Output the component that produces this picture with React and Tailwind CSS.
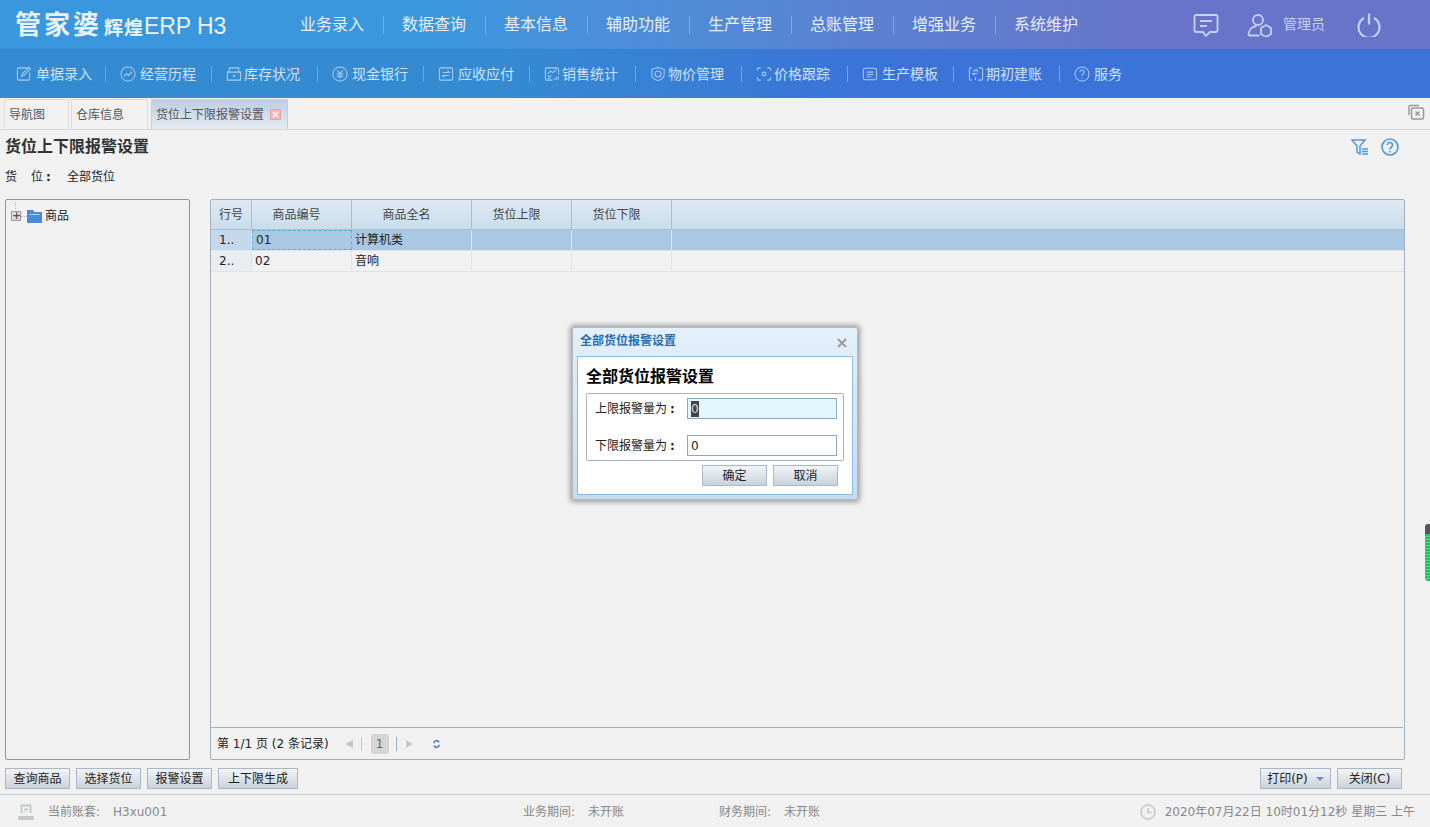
import React from 'react';

const FONT = "font-['DejaVu_Sans','Noto_Sans_CJK_SC',sans-serif]";

const topMenus = ['业务录入', '数据查询', '基本信息', '辅助功能', '生产管理', '总账管理', '增强业务', '系统维护'];

const ico = 'w-[16px] h-[16px] shrink-0 fill-none stroke-[#a9cdf0] stroke-[1.1]';

const subMenus = [
  { label: '单据录入', gap: 'gap-[4px]', icon: <><path d="M13 2H3a1.500 1.500 0 0 0-1.500 1.500v10A1.500 1.500 0 0 0 3 15h10a1.500 1.500 0 0 0 1.500-1.500V7" /><path d="M6 11l1-3 7-6.500 1.500 1.500L8.500 10z" /></> },
  { label: '经营历程', gap: 'gap-[4px]', icon: <><circle cx="8.500" cy="8.500" r="7.500" /><path d="M4 11l3-3 2 2 4-4" /></> },
  { label: '库存状况', gap: 'gap-[2px]', icon: <><path d="M1.500 6.500h14V15h-14zM3.500 6.500V2h10v4.500M7 10.500h3" /></> },
  { label: '现金银行', gap: 'gap-[4px]', icon: <><circle cx="8.500" cy="8.500" r="7.500" /><path d="M5.500 4.500l3 3.500 3-3.500M5 8.500h7M5 11h7M8.500 8v5.500" /></> },
  { label: '应收应付', gap: 'gap-[4px]', icon: <><rect x="1.500" y="2" width="14" height="13" rx="1.500" /><path d="M5 7h7L10 5M12 10H5l2 2" /></> },
  { label: '销售统计', gap: 'gap-[2px]', icon: <><path d="M9 15H3a1.500 1.500 0 0 1-1.500-1.500v-10A1.500 1.500 0 0 1 3 2h11a1.500 1.500 0 0 1 1.500 1.500V9" /><path d="M4 8l3-2.500 2 1.500 4-3M4 11h4M4 13h3M11 15v-2M13 15v-3.500M15 15v-4" /></> },
  { label: '物价管理', gap: 'gap-[2px]', icon: <><path d="M8.500 1.500l6.500 2v5.500c0 3-3 5.500-6.500 6.500-3.500-1-6.500-3.500-6.500-6.500V3.500z" /><circle cx="8.500" cy="8.500" r="3.200" /></> },
  { label: '价格跟踪', gap: 'gap-[2px]', icon: <><path d="M5 2H3a1.500 1.500 0 0 0-1.500 1.500V5M12 2h2a1.500 1.500 0 0 1 1.500 1.500V5M5 15H3a1.500 1.500 0 0 1-1.500-1.500V12M12 15h2a1.500 1.500 0 0 0 1.500-1.500V12" /><circle cx="8.500" cy="8.500" r="2" /></> },
  { label: '生产模板', gap: 'gap-[4px]', icon: <><rect x="1.500" y="2.500" width="14" height="12" rx="2" /><path d="M5 6.500h7M5 9h7M5 11.500h5" /></> },
  { label: '期初建账', gap: 'gap-[2px]', icon: <><path d="M4 2H3a1.500 1.500 0 0 0-1.500 1.500v10A1.500 1.500 0 0 0 3 15h1M11 2h3a1.500 1.500 0 0 1 1.500 1.500v10A1.500 1.500 0 0 1 14 15h-3" /><path d="M5 5h5L8 3M10 8H5l2 2M8 12v3" /></> },
  { label: '服务', gap: 'gap-[4px]', icon: <><circle cx="8.500" cy="8.500" r="7.500" /><path d="M6.200 6.500a2.300 2.300 0 1 1 3.500 2c-.8.500-1.200 1-1.200 2M8.500 12.300v1" /></> },
];

const columns = [
  { label: '行号', width: 'w-[41px]' },
  { label: '商品编号', width: 'w-[100px] pr-[10px]' },
  { label: '商品全名', width: 'w-[120px] pr-[10px]' },
  { label: '货位上限', width: 'w-[100px] pr-[10px]' },
  { label: '货位下限', width: 'w-[100px] pr-[10px]' },
];

const rows = [
  { no: '1..', code: '01', name: '计算机类', selected: true },
  { no: '2..', code: '02', name: '音响', selected: false },
];

const Btn = ({ children, className = '' }) => (
  <button className={`h-[21px] border border-[#a9b6c6] bg-gradient-to-b from-[#f3f5f7] to-[#c9d2da] text-[12px] text-[#222] flex items-center justify-center ${className}`}>
    {children}
  </button>
);

const Sep = ({ className }) => <span className={`w-px shrink-0 ${className}`} />;

const TopBar = () => (
  <div className="h-[49px] shrink-0 flex items-center bg-gradient-to-r from-[#3b97dd] from-30% to-[#6774c9] to-80%">
    <div className="w-[300px] pl-[15px] flex items-end text-[#e8f2fb] leading-none">
      <span className="text-[26px] font-bold tracking-[3px]">管家婆</span>
      <span className="text-[19px] font-bold ml-[2px] tracking-[1px]">辉煌</span>
      <span className="text-[23px] tracking-[-0.1px] font-['Liberation_Sans',sans-serif]">ERP H3</span>
    </div>
    <div className="flex items-center text-[16px] text-[#e6eefa]">
      {topMenus.map((m, i) => (
        <React.Fragment key={m}>
          {i > 0 && <Sep className="h-[18px] mx-[18.5px] bg-[#6fb0e6]" />}
          <span>{m}</span>
        </React.Fragment>
      ))}
    </div>
    <div className="ml-auto flex items-center">
      <svg viewBox="0 0 26 24" className="w-[26px] h-[24px] fill-none stroke-[#c3d2f0] stroke-[1.8]">
        <path d="M3 2h20a1.500 1.500 0 0 1 1.500 1.500v14a1.500 1.500 0 0 1-1.500 1.500h-6l-4 4-3-4H3a1.500 1.500 0 0 1-1.500-1.500v-14A1.500 1.500 0 0 1 3 2z" />
        <path d="M7 8h12M7 13h7" />
      </svg>
      <svg viewBox="0 0 26 24" className="w-[26px] h-[24px] ml-[28px] fill-none stroke-[#c3d2f0] stroke-[1.8]">
        <circle cx="11" cy="7" r="5" />
        <path d="M1.500 22.500c0-5 3-9 8-9.500M1.500 22.500h11" />
        <path d="M19 12l5 3v6l-5 3-5-3v-6z" />
      </svg>
      <span className="text-[14px] text-[#c3d2f0] ml-[10px]">管理员</span>
      <svg viewBox="0 0 24 24" className="w-[24px] h-[24px] ml-[32px] mr-[49px] fill-none stroke-[#c3d2f0] stroke-[2.2]">
        <path d="M7 5a10.500 10.500 0 1 0 10 0M12 0.500v11" />
      </svg>
    </div>
  </div>
);

const SubBar = () => (
  <div className="h-[49px] shrink-0 flex items-center pl-[16px] pt-[1px] bg-gradient-to-r from-[#358bd2] from-35% to-[#3b73d8] to-60% text-[14px] text-[#cfe2f6]">
    {subMenus.map((m, i) => (
      <React.Fragment key={m.label}>
        {i > 0 && <Sep className="h-[16px] ml-[15px] mr-[14px] bg-[#6aa9e2]" />}
        <span className={`flex items-center whitespace-nowrap ${m.gap} ${i === 0 ? 'w-[74px]' : 'w-[76px]'}`}>
          <svg viewBox="0 0 17 17" className={ico}>{m.icon}</svg>
          {m.label}
        </span>
      </React.Fragment>
    ))}
  </div>
);

const Tabs = () => (
  <div className="h-[32px] shrink-0 flex items-end pl-[4px] border-b border-[#d8d8d8] relative">
    <div className="h-[30px] w-[65px] border border-b-0 border-[#dcdcdc] flex items-center pl-[4px] text-[12px] text-[#555]">导航图</div>
    <div className="h-[30px] w-[77px] ml-[2px] border border-b-0 border-[#dcdcdc] flex items-center pl-[4px] text-[12px] text-[#555]">仓库信息</div>
    <div className="h-[30px] w-[137px] ml-[3px] border border-b-0 border-[#c5cfdc] bg-gradient-to-b from-[#bccde4] to-[#e6ebf1] flex items-center pl-[4px] text-[12px] text-[#555]">
      货位上下限报警设置
      <span className="ml-[6px] w-[11px] h-[11px] bg-[#eeb6b6] border border-[#e8a4a4] text-white text-[10px] leading-[9px] text-center font-bold">×</span>
    </div>
    <svg viewBox="0 0 18 16" className="absolute right-[5px] top-[6px] w-[18px] h-[16px] fill-none stroke-[#999] stroke-[1.5]">
      <path d="M2 11V3a1.500 1.500 0 0 1 1.500-1.500H12" />
      <rect x="4.500" y="4" width="12" height="11" rx="1.500" />
      <path d="M8.500 7.500l4 4M12.500 7.500l-4 4" />
    </svg>
  </div>
);

const Tree = () => (
  <div className="w-[185px] shrink-0 border border-[#8d96a0] rounded-[2px] relative pt-[7px] pl-[5px]">
    <div className="flex items-center">
      <span className="w-[10px] h-[10px] border border-[#999] bg-[#ddd] text-[11px] leading-[8px] text-center font-bold text-[#555]">+</span>
      <span className="w-[6px] border-t border-dotted border-[#bbb]" />
      <svg viewBox="0 0 15 14" className="w-[15px] h-[14px]">
        <path d="M0 1h6l1.500 2H15v11H0z" fill="#4a8adb" />
        <path d="M2.500 5.500h10" stroke="#b5d3f2" strokeWidth="1" />
      </svg>
      <span className="ml-[3px] text-[12px] text-[#222]">商品</span>
    </div>
    <span className="absolute left-[9px] top-[2px] h-[7px] border-l border-dotted border-[#bbb]" />
  </div>
);

const Grid = () => (
  <div className="flex-1 min-w-0 flex flex-col border border-[#a3afbc] rounded-[2px]">
    <div className="h-[30px] shrink-0 flex border-b border-[#a5bfd6] bg-gradient-to-b from-[#e0eaf3] to-[#c9dcec] text-[12px] text-[#444]">
      {columns.map((c) => (
        <div key={c.label} className={`${c.width} flex items-center justify-center border-r border-[#a5bfd6]`}>{c.label}</div>
      ))}
    </div>
    {rows.map((r) => (
      <div key={r.no} className={`h-[21px] shrink-0 flex text-[12px] text-[#222] border-b border-[#dce5ee] ${r.selected ? 'bg-[#abc8e2]' : ''}`}>
        <div className={`w-[41px] flex items-center pl-[8px] border-r border-[#dce5ee] ${r.selected ? 'bg-[#c3d8ea]' : 'bg-[#e8edf2]'}`}>{r.no}</div>
        <div className={`w-[100px] flex items-center pl-[3px] ${r.selected ? 'border border-dashed border-[#55b2cf]' : 'border-r border-[#dce5ee]'}`}>{r.code}</div>
        <div className="w-[120px] flex items-center pl-[3px] border-r border-[#dce5ee]">{r.name}</div>
        <div className="w-[100px] border-r border-[#dce5ee]" />
        <div className="w-[100px] border-r border-[#dce5ee]" />
      </div>
    ))}
    <div className="flex-1" />
    <div className="h-[32px] shrink-0 mr-[1px] border-t border-[#9fb0c0] flex items-center pl-[6px] text-[12px] text-[#222]">
      <span>第 1/1 页 (2 条记录)</span>
      <span className="ml-[16px] w-0 h-0 border-y-[4px] border-y-transparent border-r-[8px] border-r-[#c4c8cc]" />
      <Sep className="h-[14px] mx-[8.5px] bg-[#bcc6d0]" />
      <span className="w-[18px] h-[20px] rounded-[2px] bg-[#d5d5d5] text-[#666] flex items-center justify-center">1</span>
      <Sep className="h-[14px] mx-[7px] bg-[#8fb0cf]" />
      <span className="ml-[2px] w-0 h-0 border-y-[4px] border-y-transparent border-l-[7px] border-l-[#c4c8cc]" />
      <svg viewBox="0 0 8 10" className="ml-[20px] w-[7px] h-[10px] fill-none stroke-[#4a7fb5] stroke-[1.8]">
        <path d="M1 4a3 3 0 0 1 5-2l1 1M7 6a3 3 0 0 1-5 2L1 7" />
      </svg>
    </div>
  </div>
);

const StatusBar = () => (
  <div className="h-[33px] shrink-0 pt-[1px] border-t border-[#c4cbd2] flex items-center text-[12px] text-[#888]">
    <svg viewBox="0 0 16 16" className="ml-[18px] w-[16px] h-[16px] fill-none stroke-[#c4c8cc] stroke-[1.800]">
      <path d="M3.500 9V1.500h9V9M6 5.500h4" />
      <path d="M1 13h14v2H1z" fill="#c4c8cc" />
    </svg>
    <span className="ml-[14px] w-[65px]">当前账套:</span>
    <span className="w-[410px]">H3xu001</span>
    <span className="w-[65px]">业务期间:</span>
    <span className="w-[131px]">未开账</span>
    <span className="w-[65px]">财务期间:</span>
    <span>未开账</span>
    <svg viewBox="0 0 16 16" className="ml-auto w-[16px] h-[16px] fill-none stroke-[#c8c8c8] stroke-[1.600]">
      <circle cx="8" cy="8" r="7" />
      <path d="M8 4v4.500h3.500" />
    </svg>
    <span className="ml-[9px] mr-[15px]">2020年07月22日 10时01分12秒 星期三 上午</span>
  </div>
);

const Dialog = () => (
  <div className="absolute left-[572px] top-[327px] w-[286px] h-[173px] bg-gradient-to-b from-[#e4f0fb] to-[#c4dcf4] border border-[#b0b8c0] rounded-[2px] shadow-[0_0_5px_2px_rgba(90,90,90,0.55)] px-[4px] pb-[4px] flex flex-col">
    <div className="h-[28px] shrink-0 flex items-center pl-[3px] pr-[6px] pb-[2px] justify-between text-[12px] font-bold text-[#2a6cb0]">
      全部货位报警设置
      <svg viewBox="0 0 10 10" className="w-[10px] h-[10px] mt-[4px] fill-none stroke-[#9a9a9a] stroke-[2]">
        <path d="M1 1l8 8M9 1L1 9" />
      </svg>
    </div>
    <div className="flex-1 bg-white border border-[#8fbbe0] px-[8px] pt-[9px]">
      <div className="text-[16px] font-bold text-black leading-[21px]">全部货位报警设置</div>
      <div className="mt-[6px] h-[68px] border border-[#aab2ba] rounded-[2px] pl-[8px] pt-[4px] text-[12px] text-[#222]">
        <div className="flex items-center h-[21px]">
          <span className="w-[92px]">上限报警量为<span className="ml-[3px] font-bold">:</span></span>
          <div className="w-[150px] h-[21px] border border-[#86a9c4] bg-[#e2f6fe] flex items-center pl-[3px]">
            <span className="bg-[#444] text-[#ddd] leading-[16px]">0</span>
          </div>
        </div>
        <div className="flex items-center h-[21px] mt-[16px]">
          <span className="w-[92px]">下限报警量为<span className="ml-[3px] font-bold">:</span></span>
          <div className="w-[150px] h-[21px] border border-[#86a9c4] bg-white flex items-center pl-[3px]">0</div>
        </div>
      </div>
      <div className="mt-[4px] flex justify-end gap-[6px] pr-[6px]">
        <Btn className="w-[65px]">确定</Btn>
        <Btn className="w-[65px]">取消</Btn>
      </div>
    </div>
  </div>
);

export default function App() {
  return (
    <div className={`${FONT} w-[1430px] h-[827px] overflow-hidden relative flex flex-col bg-[#f1f1f1]`}>
      <TopBar />
      <SubBar />
      <Tabs />
      <div className="flex-1 min-h-0 flex flex-col px-[5px]">
        <div className="h-[33px] shrink-0 flex items-center justify-between pr-[26px]">
          <span className="text-[16px] font-bold text-[#333]">货位上下限报警设置</span>
          <span className="flex items-center gap-[12px]">
            <svg viewBox="0 0 18 16" className="w-[18px] h-[16px] fill-none stroke-[#4d9bdc] stroke-[1.500]">
              <path d="M1 1h13L9 7v8L6 13V7z" />
              <path d="M11 10h6M11 12.500h6M11 15h6" />
            </svg>
            <svg viewBox="0 0 18 18" className="w-[18px] h-[18px] fill-none stroke-[#4d9bdc] stroke-[1.700]">
              <circle cx="9" cy="9" r="8" />
              <path d="M6.500 7a2.500 2.500 0 1 1 4 2c-1 .7-1.500 1.200-1.500 2.500M9 13v1.500" />
            </svg>
          </span>
        </div>
        <div className="h-[27px] shrink-0 flex items-center text-[12px] text-[#222]">
          <span className="w-[62px]">货<span className="ml-[14px]">位</span><span className="ml-[3px] font-bold">:</span></span>
          <span>全部货位</span>
        </div>
        <div className="mt-[9px] h-[561px] shrink-0 flex gap-[20px] pr-[20px]">
          <Tree />
          <Grid />
        </div>
        <div className="mt-[8px] flex gap-[6px] pr-[23px]">
          <Btn className="w-[65px]">查询商品</Btn>
          <Btn className="w-[65px]">选择货位</Btn>
          <Btn className="w-[65px]">报警设置</Btn>
          <Btn className="w-[80px]">上下限生成</Btn>
          <Btn className="w-[71px] ml-auto gap-[8px]">
            打印(P)
            <span className="w-0 h-0 border-x-[4px] border-x-transparent border-t-[4px] border-t-[#6f8fc0]" />
          </Btn>
          <Btn className="w-[65px]">关闭(C)</Btn>
        </div>
      </div>
      <StatusBar />
      <Dialog />
      <div className="absolute right-0 top-[524px] w-[5px] h-[57px] rounded-l-[3px] bg-[repeating-linear-gradient(to_bottom,#22c55e_0,#22c55e_2px,#4ade80_2px,#4ade80_3px)] border-t-[10px] border-[#555]" />
    </div>
  );
}
